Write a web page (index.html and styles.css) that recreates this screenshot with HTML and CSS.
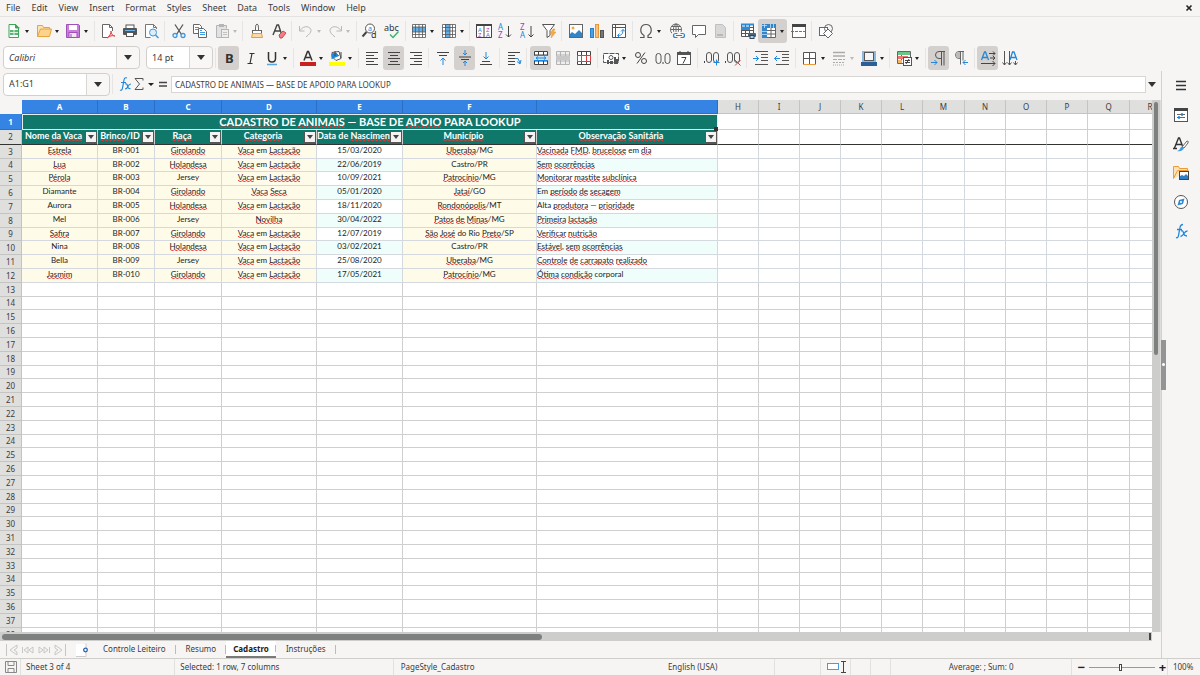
FILE: index.html
```html
<!DOCTYPE html>
<html lang="en">
<head>
<meta charset="utf-8">
<title>Cadastro</title>
<link rel="stylesheet" href="styles.css">
</head>
<body>
<nav class="menu">
<button>File</button><button>Edit</button><button>View</button><button>Insert</button><button>Format</button><button>Styles</button><button>Sheet</button><button>Data</button><button>Tools</button><button>Window</button><button>Help</button>
<button class="close" aria-label="Close"><svg width="8" height="8" viewBox="0 0 8 8"><path d="M1.500 1.500l5 5M6.500 1.500l-5 5" stroke="#222" stroke-width="1.600"/></svg></button>
</nav>

<div class="bar bar-standard"><div class="tools">
<button class="tool drop" aria-label="New"><svg viewBox="0 0 16 16"><path d="M3 1.500h6.500l3 3v10h-9.500z" fill="#fff" stroke="#3fa55b"/><path d="M9.500 1v4h4" fill="#3fa55b" stroke="#3fa55b"/><rect x="4" y="7" width="8" height="5" fill="#5cb574"/><path d="M4 9.500h8M8 7v5" stroke="#d8f2df"/></svg></button>
<button class="tool drop" aria-label="Open"><svg viewBox="0 0 16 16"><path d="M1.500 13.500v-11h5l1 2h6v2" fill="#fbe3b5" stroke="#e8a33d"/><path d="M1.500 13.500l3-7.500h11l-2 7.500z" fill="#fcd38c" stroke="#e8a33d"/></svg></button>
<button class="tool drop" aria-label="Save"><svg viewBox="0 0 16 16"><path d="M1.500 1.500h12l1 1v12h-13z" fill="#c77fd9" stroke="#a04fb8"/><rect x="4" y="2" width="8" height="5" fill="#fff"/><rect x="4" y="9.500" width="8" height="5" fill="#f3e5f7" stroke="#a04fb8"/><path d="M6 11v3" stroke="#a04fb8"/></svg></button>
<i class="sep"></i>
<button class="tool" aria-label="Export as PDF"><svg viewBox="0 0 16 16"><path d="M12.500 8v-3.500l-3-3h-7v13h5" fill="#fff" stroke="#666"/><path d="M9.500 1.500v3h3" stroke="#666" fill="none"/><path d="M7 15c3-2 4-5 4-7 0 3 2 5 4 5-3-1-5 0-8 2z" stroke="#e0474c" fill="#f7c5c7"/></svg></button>
<button class="tool" aria-label="Print"><svg viewBox="0 0 16 16"><rect x="4" y="2" width="8" height="4" fill="#fff" stroke="#555"/><rect x="1" y="5" width="14" height="7" rx="1" fill="#555"/><path d="M3 7.500h10" stroke="#6bb4ea"/><rect x="4.500" y="9.500" width="7" height="4" fill="#fff" stroke="#555"/></svg></button>
<button class="tool" aria-label="Print preview"><svg viewBox="0 0 16 16"><path d="M13.500 6v-1.500l-3-3h-8v13h5" fill="#fff" stroke="#777"/><path d="M10.500 1.500v3h3" stroke="#777" fill="none"/><circle cx="10" cy="9.500" r="3.500" fill="#d9edfb" stroke="#3d9ae0"/><path d="M12.500 12l3 3" stroke="#3d9ae0" stroke-width="1.500"/></svg></button>
<i class="sep"></i>
<button class="tool" aria-label="Cut"><svg viewBox="0 0 16 16"><path d="M4 1.500l6.500 10M12 1.500l-6.500 10" stroke="#555" fill="none" stroke-width="1.300"/><circle cx="4" cy="12.500" r="2" fill="none" stroke="#3d9ae0" stroke-width="1.300"/><circle cx="12" cy="12.500" r="2" fill="none" stroke="#3d9ae0" stroke-width="1.300"/></svg></button>
<button class="tool" aria-label="Copy"><svg viewBox="0 0 16 16"><path d="M1.500 1.500h6l2 2v7h-8z" fill="#fff" stroke="#666"/><path d="M3 4.500h4M3 6.500h3" stroke="#3d9ae0"/><path d="M6.500 5.500h5l3 3v6h-8z" fill="#fff" stroke="#666"/><path d="M8 9.500h5M8 11.500h5M8 7.500h2" stroke="#3d9ae0"/></svg></button>
<button class="tool drop off" aria-label="Paste"><svg viewBox="0 0 16 16"><path d="M7 14.500h-4.500v-12h10v3" fill="#e2e2e2" stroke="#b5b5b5"/><rect x="5" y="1" width="5" height="3" fill="#b5b5b5"/><rect x="7.500" y="6.500" width="7" height="8" fill="#eee" stroke="#b5b5b5"/><path d="M9 9.500h4M9 11.500h4" stroke="#c2c2c2"/></svg></button>
<i class="sep"></i>
<button class="tool" aria-label="Clone formatting"><svg viewBox="0 0 16 16"><path d="M6.500 8v-3q0-4 1.500-4t1.500 4v3" fill="#fff" stroke="#666"/><rect x="3.500" y="7.500" width="9" height="3" fill="#fff" stroke="#666"/><path d="M3.500 10.500h9l1 4h-11z" fill="#fbd9a8" stroke="#eb9a3c"/></svg></button>
<button class="tool" aria-label="Clear formatting"><svg viewBox="0 0 16 16"><path d="M2 12l4-10h1.500l3 9M4 8h5" stroke="#444" fill="none" stroke-width="1.400"/><path d="M8 12l4-4 3 2-4 5h-2z" fill="#f08083" stroke="#df4146"/></svg></button>
<i class="sep"></i>
<button class="tool drop off" aria-label="Undo"><svg viewBox="0 0 16 16"><path d="M1.500 3v5h5M2 7.500c4-6 11-4 11 0 0 2-2 4-5 6.500" stroke="#b8b8b8" fill="none"/></svg></button>
<button class="tool drop off" aria-label="Redo"><svg viewBox="0 0 16 16"><path d="M14.500 3v5h-5M14 7.500c-4-6-11-4-11 0 0 2 2 4 5 6.500" stroke="#b8b8b8" fill="none"/></svg></button>
<i class="sep"></i>
<button class="tool" aria-label="Find and replace"><svg viewBox="0 0 16 16"><circle cx="8" cy="5.500" r="4.500" fill="#fff" stroke="#555"/><path d="M4.500 9l-4 4.500" stroke="#444" stroke-width="2"/><text x="6" y="8" font-size="7" fill="#2287da">a</text><text x="9" y="15" font-size="9" fill="#333">d</text></svg></button>
<button class="tool" aria-label="Spelling"><svg viewBox="0 0 16 16"><text x="0" y="8" font-size="9" fill="#333">abc</text><path d="M6 11.500l3 3 5.500-6" stroke="#3db56c" fill="none" stroke-width="1.500"/></svg></button>
<i class="sep"></i>
<button class="tool drop" aria-label="Row"><svg viewBox="0 0 16 16"><path d="M1.500 1.500h13v13h-13z" fill="#fff"/><rect x="1" y="4" width="14" height="5" fill="#5fb0ea"/><path d="M1.500 1.500h13v13h-13zM4.500 1.500v13M8 1.500v13M11.500 1.500v13M1.500 4h13M1.500 9h13M1.500 11.500h13" fill="none" stroke="#555" stroke-width=".8"/></svg></button>
<button class="tool drop" aria-label="Column"><svg viewBox="0 0 16 16"><path d="M1.500 1.500h13v13h-13z" fill="#fff"/><rect x="4" y="1" width="5" height="14" fill="#5fb0ea"/><path d="M1.500 1.500h13v13h-13zM1.500 4.500h13M1.500 8h13M1.500 11.500h13M4.500 1.500v13M9 1.500v13M11.500 1.500v13" fill="none" stroke="#555" stroke-width=".8"/></svg></button>
<i class="sep"></i>
<button class="tool" aria-label="Sort"><svg viewBox="0 0 16 16"><path d="M.500 1.500h15v13h-15zM8 1v14" fill="#fff" stroke="#444"/><path d="M0 2h16" stroke="#444" stroke-width="2"/><text x="2" y="9" font-size="6" fill="#2287da">A</text><text x="2" y="14" font-size="6" fill="#a33fbb">Z</text><text x="10" y="9" font-size="6" fill="#a33fbb">Z</text><text x="10" y="14" font-size="6" fill="#2287da">A</text></svg></button>
<button class="tool" aria-label="Sort ascending"><svg viewBox="0 0 16 16"><text x="1" y="7" font-size="8" fill="#2287da">A</text><text x="1" y="15" font-size="8" fill="#a33fbb">Z</text><path d="M11.500 3v11M9 11.500l2.500 2.500 2.500-2.500" stroke="#444" fill="none"/></svg></button>
<button class="tool" aria-label="Sort descending"><svg viewBox="0 0 16 16"><text x="1" y="7" font-size="8" fill="#a33fbb">Z</text><text x="1" y="15" font-size="8" fill="#2287da">A</text><path d="M12 3v11M9.500 11.500l2.500 2.500 2.500-2.500" stroke="#444" fill="none"/></svg></button>
<button class="tool" aria-label="AutoFilter"><svg viewBox="0 0 16 16"><path d="M1.500 1.500h12l-4.500 6v5l-3 2v-7z" fill="#fff" stroke="#555"/><path d="M12 6l-3 5h2l-1 4 5-6h-2.500l1.500-3z" fill="#f5aa4a" stroke="#e8912a" stroke-width=".5"/></svg></button>
<i class="sep"></i>
<button class="tool" aria-label="Insert image"><svg viewBox="0 0 16 16"><rect x="1.500" y="1.500" width="13" height="13" fill="#fff" stroke="#666"/><circle cx="5" cy="5" r="1.500" fill="#f5aa4a"/><path d="M2 14v-3l2-2 3 2 4-4 3 3v4z" fill="#3385c6"/></svg></button>
<button class="tool" aria-label="Insert chart"><svg viewBox="0 0 16 16"><rect x="1.500" y="5.500" width="3" height="9" fill="#4ba2e2" stroke="#2b7fc3"/><rect x="6.500" y="1.500" width="3" height="13" fill="#f8c27c" stroke="#e8963a"/><rect x="11.500" y="7.500" width="3" height="7" fill="#777" stroke="#555"/></svg></button>
<button class="tool" aria-label="Pivot table"><svg viewBox="0 0 16 16"><path d="M1.500 1.500h13v13h-13zM1.500 4.500h13M4.500 1.500v13" fill="#fff" stroke="#555"/><path d="M7 12.500c4 0 5-2 5-6M10 8.500l2-2 2 2M8.500 10.500l-2 2 2 2" stroke="#2287da" fill="none"/></svg></button>
<i class="sep"></i>
<button class="tool drop" aria-label="Special character"><svg viewBox="0 0 16 16"><path d="M2 14.500h4v-2c-5-3-4-11 2-11s7 8 2 11v2h4" stroke="#555" fill="none" stroke-width="1.200"/></svg></button>
<i class="gap"></i>
<button class="tool" aria-label="Hyperlink"><svg viewBox="0 0 16 16"><circle cx="7" cy="6.500" r="5.500" fill="#fff" stroke="#666"/><path d="M1.500 6.500h11M7 1v11M3 3.500h8M3 9.500h8" stroke="#666" fill="none"/><ellipse cx="7" cy="6.500" rx="2.500" ry="5.500" fill="none" stroke="#666"/><rect x="3" y="9" width="13" height="7" fill="#f6f5f4"/><path d="M8.500 10.500h-2a2 2 0 0 0 0 4h2M11.500 10.500h2a2 2 0 0 1 0 4h-2M7 12.500h6" stroke="#2287da" fill="none" stroke-width="1.200"/></svg></button>
<button class="tool" aria-label="Comment"><svg viewBox="0 0 16 16"><path d="M1.500 2.500h13v9h-7l-3 3v-3h-3z" fill="#fff" stroke="#666"/></svg></button>
<button class="tool off" aria-label="Headers and footers"><svg viewBox="0 0 16 16"><path d="M3.500 1.500h7l3 3v10h-10z" fill="#d8d8d8" stroke="#c0c0c0"/><path d="M5 11h6v2h-6z" fill="#b8b8b8"/></svg></button>
<i class="sep"></i>
<button class="tool" aria-label="Define print area"><svg viewBox="0 0 16 16"><path d="M1.500 1.500h12v12h-12zM5.500 1.500v12M9.500 1.500v12M1.500 4.500h12M1.500 7.500h12M1.500 10.500h12" fill="#fff" stroke="#555"/><path d="M1 1.500h13M1 4.500h9M1 6h9" stroke="#2f8bd6" stroke-width="2"/><rect x="8" y="10" width="8" height="4" rx="1" fill="#4d6478"/><rect x="10" y="12.500" width="4" height="3" fill="#9fd0f5" stroke="#345"/></svg></button>
<button class="tool drop on" aria-label="Freeze rows and columns"><svg viewBox="0 0 16 16"><path d="M1.500 1.500h13v13h-13zM10 1.500v13M1.500 7.500h13M1.500 11h13" fill="#fff" stroke="#666"/><path d="M1 1h14v4h-9v10h-5z" fill="#3584c8"/><path d="M3.500 0v5M1 2.500h5M9.500 1v4M12.500 1v4M1 8.500h5M1 11.500h5" stroke="#bfe0fa" stroke-width=".8"/></svg></button>
<button class="tool" aria-label="Split window"><svg viewBox="0 0 16 16"><rect x="1.500" y="1.500" width="13" height="13" fill="#fff" stroke="#666"/><path d="M1 2.500h14" stroke="#444" stroke-width="3"/><path d="M0 8.500h16" stroke="#2287da" stroke-dasharray="3 1"/></svg></button>
<i class="sep"></i>
<button class="tool" aria-label="Show draw functions"><svg viewBox="0 0 16 16"><rect x="1.500" y="4.500" width="8" height="8" fill="#fff" stroke="#666"/><circle cx="10.500" cy="5.500" r="4" fill="none" stroke="#666"/><path d="M10 6l4.500 4.500-4.500 4.500-4.500-4.500z" fill="#fff" stroke="#666"/></svg></button>
</div></div>

<div class="bar bar-format">
<select class="combo font" aria-label="Font name"><option>Calibri</option></select>
<select class="combo size" aria-label="Font size"><option>14 pt</option></select>
<i class="sep"></i>
<div class="tools">
<button class="tool on" aria-label="Bold"><svg viewBox="0 0 16 16"><text x="4" y="13" font-size="13" font-weight="700" fill="#333">B</text></svg></button>
<button class="tool" aria-label="Italic"><svg viewBox="0 0 16 16"><path d="M6.500 3.500h5M4.500 13.500h5M9 3.500l-2 10" stroke="#333" fill="none" stroke-width="1.200"/></svg></button>
<button class="tool drop" aria-label="Underline"><svg viewBox="0 0 16 16"><path d="M4.500 2v6.500q0 3.500 3.500 3.500t3.500-3.500v-6.500" stroke="#333" fill="none" stroke-width="1.500"/><path d="M3 14.500h10" stroke="#5aa7e6" stroke-width="1.500"/></svg></button>
<i class="sep"></i>
<button class="tool drop" aria-label="Font color"><svg viewBox="0 0 16 16"><path d="M4 10.500l3.500-9h1l3.500 9M5.500 7.500h5" stroke="#333" fill="none" stroke-width="1.500"/><rect y="12" width="16" height="4" fill="#c9211e"/></svg></button>
<button class="tool drop" aria-label="Background color"><svg viewBox="0 0 16 16"><path d="M3 2.500l7-1 2 7-5 2-4-4z" fill="#fff" stroke="#555"/><path d="M3 9v-5l4-1 3 3" fill="#2287da" stroke="#2287da"/><path d="M6 1v5M12 2v6" stroke="#444"/><rect y="12" width="16" height="4" fill="#ff0"/></svg></button>
<i class="sep"></i>
<button class="tool" aria-label="Align left"><svg viewBox="0 0 16 16"><path d="M2 2.500h12M2 5.500h8M2 8.500h12M2 11.500h8M2 14.500h12" stroke="#444"/></svg></button>
<button class="tool on" aria-label="Center horizontally"><svg viewBox="0 0 16 16"><path d="M2 2.500h12M4 5.500h8M2 8.500h12M4 11.500h8M2 14.500h12" stroke="#444"/></svg></button>
<button class="tool" aria-label="Align right"><svg viewBox="0 0 16 16"><path d="M2 2.500h12M6 5.500h8M2 8.500h12M6 11.500h8M2 14.500h12" stroke="#444"/></svg></button>
<i class="sep"></i>
<button class="tool" aria-label="Align top"><svg viewBox="0 0 16 16"><path d="M2 2.500h12M4 5.500h8" stroke="#444"/><path d="M8 15v-7M5.500 10.500l2.500-2.500 2.500 2.500" stroke="#2287da" fill="none"/></svg></button>
<button class="tool on" aria-label="Center vertically"><svg viewBox="0 0 16 16"><path d="M2 7h12M4 9.500h8" stroke="#444"/><path d="M8 0v5M6 3l2 2 2-2M8 16v-5M6 13l2-2 2 2" stroke="#2287da" fill="none"/></svg></button>
<button class="tool" aria-label="Align bottom"><svg viewBox="0 0 16 16"><path d="M4 11.500h8M2 14.500h12" stroke="#444"/><path d="M8 2v7M5.500 6.500l2.500 2.500 2.500-2.500" stroke="#2287da" fill="none"/></svg></button>
<i class="sep"></i>
<button class="tool" aria-label="Wrap text"><svg viewBox="0 0 16 16"><path d="M2 2.500h12M2 5.500h7M2 8.500h9M2 11.500h7M2 14.500h7" stroke="#444"/><path d="M9 8.500h3l2 4.500M11 11.500l3 2.500 1-4" stroke="#2287da" fill="none"/></svg></button>
<i class="sep"></i>
<button class="tool on" aria-label="Merge and center"><svg viewBox="0 0 16 16"><path d="M1.500 1.500h13v13h-13zM1.500 5h13M1.500 11h13M5.500 1.500v13M10.500 1.500v13" fill="#fff" stroke="#444"/><rect x="1" y="6" width="14" height="4" fill="#c6e4fb"/><path d="M3 8h10M5 6.500l-2 1.500 2 1.500M11 6.500l2 1.500-2 1.500M1 5.500h14M1 10.500h14" stroke="#2287da" fill="none"/></svg></button>
<button class="tool off" aria-label="Merge cells"><svg viewBox="0 0 16 16"><path d="M1.500 1.500h13v13h-13zM1.500 5h13M1.500 11h13M5.500 1.500v13M10.500 1.500v13" fill="#eee" stroke="#b4b4b4"/><rect x="1" y="6" width="14" height="4" fill="#c8c8c8"/></svg></button>
<button class="tool" aria-label="Unmerge cells"><svg viewBox="0 0 16 16"><path d="M1.500 1.500h13v13h-13zM5.500 1.500v13M10.500 1.500v13" fill="#fff" stroke="#444"/><path d="M1 5.500h14M1 11.500h14M5.500 5v6M10.500 5v6M1.500 5v6M14.500 5v6" stroke="#e0393e"/></svg></button>
<i class="sep"></i>
<button class="tool drop" aria-label="Format as currency"><svg viewBox="0 0 16 16"><path d="M.500 3.500h15v9h-15z" stroke="#555" fill="#fff" stroke-dasharray="5 1"/><circle cx="8" cy="7.500" r="2" fill="#fff" stroke="#555"/><path d="M4 10h2v4h-2zM7 11h3v3h-3zM11 7h2v7h-2zM13 9h2v5h-2z" fill="#555"/></svg></button>
<button class="tool" aria-label="Format as percent"><svg viewBox="0 0 16 16"><circle cx="5" cy="5" r="2.500" fill="none" stroke="#444"/><circle cx="11" cy="11" r="2.500" fill="none" stroke="#444"/><path d="M12 2.500l-8 11" stroke="#444"/></svg></button>
<button class="tool" aria-label="Format as number"><svg viewBox="0 0 16 16"><rect x="1" y="3.500" width="5" height="10" rx="2.500" fill="none" stroke="#555"/><rect x="10" y="3.500" width="5" height="10" rx="2.500" fill="none" stroke="#555"/><path d="M8 12v2" stroke="#444"/></svg></button>
<button class="tool" aria-label="Format as date"><svg viewBox="0 0 16 16"><rect x="1.500" y="2.500" width="13" height="12" fill="#fff" stroke="#555"/><path d="M1 4h14" stroke="#555" stroke-width="2"/><path d="M4 1v2M12 1v2M5.500 7.500h4.500l-3 6" stroke="#444" fill="none"/></svg></button>
<i class="sep"></i>
<button class="tool" aria-label="Add decimal place"><svg viewBox="0 0 16 16"><rect x="2.500" y="2.500" width="5" height="10" rx="2.500" fill="none" stroke="#555"/><rect x="9.500" y="2.500" width="5" height="10" rx="2.500" fill="none" stroke="#555"/><path d="M.500 11v2" stroke="#444"/><path d="M12.500 9.500v6M9.500 12.500h6" stroke="#2287da"/></svg></button>
<button class="tool" aria-label="Delete decimal place"><svg viewBox="0 0 16 16"><rect x="2.500" y="2.500" width="5" height="10" rx="2.500" fill="none" stroke="#555"/><rect x="9.500" y="2.500" width="5" height="10" rx="2.500" fill="none" stroke="#555"/><path d="M.500 11v2" stroke="#444"/><path d="M10 10l5.500 5.500M15.500 10l-5.500 5.500" stroke="#e0393e"/></svg></button>
<i class="sep"></i>
<button class="tool" aria-label="Increase indent"><svg viewBox="0 0 16 16"><path d="M2 1.500h13M8 4.500h7M8 7.500h7M8 10.500h7M2 14.500h13" stroke="#555"/><path d="M0 8.500h5.500M3 6l2.500 2.500-2.500 2.500" stroke="#2287da" fill="none"/></svg></button>
<button class="tool" aria-label="Decrease indent"><svg viewBox="0 0 16 16"><path d="M2 1.500h13M8 4.500h7M8 7.500h7M8 10.500h7M2 14.500h13" stroke="#555"/><path d="M6 8.500h-5.500M3 6l-2.500 2.500 2.500 2.500" stroke="#2287da" fill="none"/></svg></button>
<i class="sep"></i>
<button class="tool drop" aria-label="Borders"><svg viewBox="0 0 16 16"><path d="M1.500 2.500h12v12h-12zM7.500 2.500v12M1.500 8.500h12" fill="#fff" stroke="#555"/><path d="M1 14.500h13" stroke="#eb9a3c"/></svg></button>
<button class="tool drop off" aria-label="Border style"><svg viewBox="0 0 16 16"><path d="M2 2.500h12M2 6h12" stroke="#aaa" stroke-width="1.500"/><path d="M2 9.500h12" stroke="#aaa" stroke-dasharray="4 1"/><path d="M2 12.500h12" stroke="#aaa" stroke-dasharray="2 1"/><path d="M2 15h12" stroke="#aaa" stroke-dasharray="1 1"/></svg></button>
<button class="tool drop" aria-label="Border color"><svg viewBox="0 0 16 16"><rect x="1" y="1" width="14" height="11" fill="#8db9dc"/><rect x="3.500" y="2.500" width="9" height="8" fill="#f5f5f5" stroke="#555"/><rect y="12" width="16" height="4" fill="#2a6099"/></svg></button>
<i class="sep"></i>
<button class="tool drop" aria-label="Conditional formatting"><svg viewBox="0 0 16 16"><path d="M1.500 1.500h13v12h-13zM5.500 1.500v12" fill="#fff" stroke="#666"/><rect x="2" y="2" width="12" height="3" fill="#69c889"/><rect x="2" y="6" width="10" height="3" fill="#ef7477"/><rect x="2" y="10" width="4" height="3" fill="#f6b765"/><rect x="7.500" y="7.500" width="8" height="8" fill="#fff" stroke="#555"/><path d="M9 10.500h5M9 12.500h5M13 9l-3 5" stroke="#444"/></svg></button>
<i class="sep"></i>
<button class="tool on" aria-label="Left-to-right"><svg viewBox="0 0 16 16"><path d="M14 1.500h-6a3.500 3.500 0 0 0 0 7h2M10.500 1.500v14M13 1.500v14" stroke="#555" fill="none"/><path d="M0 12.500h6M3.500 10l2.500 2.500-2.500 2.500" stroke="#2287da" fill="none"/></svg></button>
<button class="tool" aria-label="Right-to-left"><svg viewBox="0 0 16 16"><path d="M11 1.500h-5a3.500 3.500 0 0 0 0 7h1M7.500 1.500v13M10 1.500v9" stroke="#666" fill="none"/><path d="M5 2h2v6a3 3 0 0 1-2-6" fill="#bbb"/><path d="M15 12.500h-5M12.500 10l-2.500 2.500 2.500 2.500" stroke="#2287da" fill="none"/></svg></button>
<i class="sep"></i>
<button class="tool on" aria-label="Text left to right"><svg viewBox="0 0 16 16"><path d="M1.500 10l3-8h1l3 8M3 7.500h4" stroke="#2287da" fill="none" stroke-width="1.300"/><path d="M9 3.500h6M13 1.500l2 2-2 2M10 8h5M13 6l2 2-2 2M1 13.500h14M12.500 11l2.500 2.500-2.500 2.500" stroke="#444" fill="none"/></svg></button>
<button class="tool" aria-label="Text top to bottom"><svg viewBox="0 0 16 16"><path d="M8 10l2.500-8h1.500l3 8M9 7.500h5" stroke="#2287da" fill="none" stroke-width="1.300"/><path d="M2.500 1v14M.500 12.500l2 2.500 2-2.500M7.500 1v14M5.500 12.500l2 2.500 2-2.500M13.500 11v4M11.500 12.500l2 2.500 2-2.500" stroke="#555" fill="none"/></svg></button>
</div></div>

<div class="work">
<main class="doc">
<div class="formula">
<select class="combo name" aria-label="Name box"><option>A1:G1</option></select>
<i class="sep"></i>
<button class="fbtn" aria-label="Function wizard"><svg width="14" height="16" viewBox="0 0 14 16"><path d="M2 14q2 1 2.500-2l1.500-8q.5-3 3-2M3 6.500h5" stroke="#2287da" fill="none" stroke-width="1.200"/><path d="M7 8q2-1 2.500 2t3 2.500M13 8q-2 0-3 2.500t-3 2.500" stroke="#2287da" fill="none" stroke-width="1.200"/></svg></button>
<button class="fbtn sum" aria-label="Select function"><svg width="10" height="14" viewBox="0 0 10 14"><path d="M9 3.500v-2h-8l4.500 5.500-4.500 5.500h8v-2" stroke="#555" fill="none"/></svg></button>
<button class="fbtn" aria-label="Formula"><svg width="10" height="10" viewBox="0 0 10 10"><path d="M1 3.500h8M1 7h8" stroke="#444" stroke-width="1.500"/></svg></button>
<input class="finput" aria-label="Input line" value="CADASTRO DE ANIMAIS — BASE DE APOIO PARA LOOKUP">
<button class="expand" aria-label="Expand formula bar"><svg width="8" height="5" viewBox="0 0 8 5"><path d="M0 0h8l-4 5z" fill="#333"/></svg></button>
</div>

<div class="view">
<div class="grid">
<table>
<colgroup><col class="w22"><col class="w76"><col class="w57"><col class="w67"><col class="w95"><col class="w86"><col class="w134"><col class="w181"><col class="w41"><col class="w41"><col class="w41"><col class="w41"><col class="w41"><col class="w42"><col class="w41"><col class="w41"><col class="w41"><col class="w42"><col class="w41"></colgroup>
<thead>
<tr class="cols"><td class="corner"></td><th class="sel">A</th><th class="sel">B</th><th class="sel">C</th><th class="sel">D</th><th class="sel">E</th><th class="sel">F</th><th class="sel">G</th><th>H</th><th>I</th><th>J</th><th>K</th><th>L</th><th>M</th><th>N</th><th>O</th><th>P</th><th>Q</th><th>R</th></tr>
<tr class="title"><th class="sel">1</th><td colspan="7" class="banner"><u>CADASTRO</u> DE <u>ANIMAIS</u> — BASE DE <u>APOIO</u> PARA LOOKUP<b class="handle"></b></td><td><td><td><td><td><td><td><td><td><td><td></tr>
<tr class="heads"><th>2</th>
<td><div class="head"><span>Nome <u>da</u> <u>Vaca</u></span><button aria-label="Filter"></button></div></td>
<td><div class="head"><span><u>Brinco</u>/ID</span><button aria-label="Filter"></button></div></td>
<td><div class="head"><span><u>Raça</u></span><button aria-label="Filter"></button></div></td>
<td><div class="head"><span><u>Categoria</u></span><button aria-label="Filter"></button></div></td>
<td><div class="head long"><span>Data de <u>Nascimento</u></span><button aria-label="Filter"></button></div></td>
<td><div class="head"><span><u>Município</u></span><button aria-label="Filter"></button></div></td>
<td><div class="head"><span><u>Observação</u> <u>Sanitária</u></span><button aria-label="Filter"></button></div></td><td><td><td><td><td><td><td><td><td><td><td></tr>
</thead>
<tbody>
<tr class="rec"><th>3<td><u>Estrela</u><td>BR-001<td><u>Girolando</u><td><u>Vaca</u> em <u>Lactação</u><td>15/03/2020<td><u>Uberaba</u>/MG<td><u>Vacinada</u> <u>FMD</u>, <u>brucelose</u> em <u>dia</u><td><td><td><td><td><td><td><td><td><td><td></tr>
<tr class="rec"><th>4<td><u>Lua</u><td>BR-002<td><u>Holandesa</u><td><u>Vaca</u> em <u>Lactação</u><td>22/06/2019<td>Castro/PR<td><u>Sem</u> <u>ocorrências</u><td><td><td><td><td><td><td><td><td><td><td></tr>
<tr class="rec"><th>5<td><u>Pérola</u><td>BR-003<td>Jersey<td><u>Vaca</u> em <u>Lactação</u><td>10/09/2021<td><u>Patrocínio</u>/MG<td><u>Monitorar</u> <u>mastite</u> <u>subclínica</u><td><td><td><td><td><td><td><td><td><td><td></tr>
<tr class="rec"><th>6<td>Diamante<td>BR-004<td><u>Girolando</u><td><u>Vaca</u> <u>Seca</u><td>05/01/2020<td><u>Jataí</u>/GO<td>Em <u>período</u> <u>de</u> <u>secagem</u><td><td><td><td><td><td><td><td><td><td><td></tr>
<tr class="rec"><th>7<td>Aurora<td>BR-005<td><u>Holandesa</u><td><u>Vaca</u> em <u>Lactação</u><td>18/11/2020<td><u>Rondonópolis</u>/MT<td>Alta <u>produtora</u> — <u>prioridade</u><td><td><td><td><td><td><td><td><td><td><td></tr>
<tr class="rec"><th>8<td>Mel<td>BR-006<td>Jersey<td><u>Novilha</u><td>30/04/2022<td><u>Patos</u> <u>de</u> <u>Minas</u>/MG<td><u>Primeira</u> <u>lactação</u><td><td><td><td><td><td><td><td><td><td><td></tr>
<tr class="rec"><th>9<td><u>Safira</u><td>BR-007<td><u>Girolando</u><td><u>Vaca</u> em <u>Lactação</u><td>12/07/2019<td><u>São</u> <u>José</u> do Rio <u>Preto</u>/SP<td><u>Verificar</u> <u>nutrição</u><td><td><td><td><td><td><td><td><td><td><td></tr>
<tr class="rec"><th>10<td>Nina<td>BR-008<td><u>Holandesa</u><td><u>Vaca</u> em <u>Lactação</u><td>03/02/2021<td>Castro/PR<td><u>Estável</u>, <u>sem</u> <u>ocorrências</u><td><td><td><td><td><td><td><td><td><td><td></tr>
<tr class="rec"><th>11<td>Bella<td>BR-009<td>Jersey<td><u>Vaca</u> em <u>Lactação</u><td>25/08/2020<td><u>Uberaba</u>/MG<td><u>Controle</u> <u>de</u> <u>carrapato</u> <u>realizado</u><td><td><td><td><td><td><td><td><td><td><td></tr>
<tr class="rec"><th>12<td><u>Jasmim</u><td>BR-010<td><u>Girolando</u><td><u>Vaca</u> em <u>Lactação</u><td>17/05/2021<td><u>Patrocínio</u>/MG<td><u>Ótima</u> <u>condição</u> corporal<td><td><td><td><td><td><td><td><td><td><td></tr>
<tr><th>13<td><td><td><td><td><td><td><td><td><td><td><td><td><td><td><td><td><td></tr>
<tr><th>14<td><td><td><td><td><td><td><td><td><td><td><td><td><td><td><td><td><td></tr>
<tr><th>15<td><td><td><td><td><td><td><td><td><td><td><td><td><td><td><td><td><td></tr>
<tr><th>16<td><td><td><td><td><td><td><td><td><td><td><td><td><td><td><td><td><td></tr>
<tr><th>17<td><td><td><td><td><td><td><td><td><td><td><td><td><td><td><td><td><td></tr>
<tr><th>18<td><td><td><td><td><td><td><td><td><td><td><td><td><td><td><td><td><td></tr>
<tr><th>19<td><td><td><td><td><td><td><td><td><td><td><td><td><td><td><td><td><td></tr>
<tr><th>20<td><td><td><td><td><td><td><td><td><td><td><td><td><td><td><td><td><td></tr>
<tr><th>21<td><td><td><td><td><td><td><td><td><td><td><td><td><td><td><td><td><td></tr>
<tr><th>22<td><td><td><td><td><td><td><td><td><td><td><td><td><td><td><td><td><td></tr>
<tr><th>23<td><td><td><td><td><td><td><td><td><td><td><td><td><td><td><td><td><td></tr>
<tr><th>24<td><td><td><td><td><td><td><td><td><td><td><td><td><td><td><td><td><td></tr>
<tr><th>25<td><td><td><td><td><td><td><td><td><td><td><td><td><td><td><td><td><td></tr>
<tr><th>26<td><td><td><td><td><td><td><td><td><td><td><td><td><td><td><td><td><td></tr>
<tr><th>27<td><td><td><td><td><td><td><td><td><td><td><td><td><td><td><td><td><td></tr>
<tr><th>28<td><td><td><td><td><td><td><td><td><td><td><td><td><td><td><td><td><td></tr>
<tr><th>29<td><td><td><td><td><td><td><td><td><td><td><td><td><td><td><td><td><td></tr>
<tr><th>30<td><td><td><td><td><td><td><td><td><td><td><td><td><td><td><td><td><td></tr>
<tr><th>31<td><td><td><td><td><td><td><td><td><td><td><td><td><td><td><td><td><td></tr>
<tr><th>32<td><td><td><td><td><td><td><td><td><td><td><td><td><td><td><td><td><td></tr>
<tr><th>33<td><td><td><td><td><td><td><td><td><td><td><td><td><td><td><td><td><td></tr>
<tr><th>34<td><td><td><td><td><td><td><td><td><td><td><td><td><td><td><td><td><td></tr>
<tr><th>35<td><td><td><td><td><td><td><td><td><td><td><td><td><td><td><td><td><td></tr>
<tr><th>36<td><td><td><td><td><td><td><td><td><td><td><td><td><td><td><td><td><td></tr>
<tr><th>37<td><td><td><td><td><td><td><td><td><td><td><td><td><td><td><td><td><td></tr>
<tr><th>38<td><td><td><td><td><td><td><td><td><td><td><td><td><td><td><td><td><td></tr>
</tbody>
</table>
</div>
<div class="vscroll"><div class="vthumb"></div></div>
</div>
<div class="hscroll"><div class="htrack"><div class="hthumb"></div><i class="tick"></i></div></div>

<div class="tabs">
<div class="tabnav">
<button aria-label="First sheet"><svg width="14" height="12" viewBox="0 0 14 12"><path d="M1.500 0v12M12 1l-7 5 7 5v-3l-3-2 3-2z" stroke="#c6c6c4" fill="none"/></svg></button>
<button aria-label="Previous sheet"><svg width="14" height="12" viewBox="0 0 14 12"><path d="M1.500 3v6M7 3l-4 3 4 3zM12 3l-4 3 4 3z" stroke="#c6c6c4" fill="none"/></svg></button>
<button aria-label="Next sheet"><svg width="14" height="12" viewBox="0 0 14 12"><path d="M2 3l4 3-4 3zM7 3l4 3-4 3zM12.500 3v6" stroke="#c6c6c4" fill="none"/></svg></button>
<button aria-label="Last sheet"><svg width="14" height="12" viewBox="0 0 14 12"><path d="M12.500 0v12M2 1l7 5-7 5v-3l3-2-3-2z" stroke="#c6c6c4" fill="none"/></svg></button>
</div>
<button class="add" aria-label="Add sheet"><svg width="14" height="14" viewBox="0 0 14 14"><path d="M1 1h10v13h-10z" fill="#fff"/><path d="M1 13.500h10v-13" stroke="#ccc" fill="none"/><circle cx="10.500" cy="7" r="1.800" fill="#fff" stroke="#2a62a8" stroke-width="1.300"/></svg></button>
<button class="tab">Controle Leiteiro</button><button class="tab">Resumo</button><button class="tab current">Cadastro</button><button class="tab">Instruções</button>
</div>
</main>

<aside class="side">
<button class="splitter" aria-label="Hide sidebar"></button>
<button aria-label="Sidebar settings"><svg viewBox="0 0 16 16"><path d="M3 3.500h10M3 7.500h10M3 11.500h10" stroke="#333" stroke-width="1.500"/></svg></button>
<button aria-label="Properties"><svg viewBox="0 0 16 16"><rect x="1.500" y="1.500" width="13" height="13" fill="#fff" stroke="#555"/><path d="M1 2.500h14" stroke="#444" stroke-width="3"/><path d="M4 7.500h8M4 10.500h8" stroke="#666"/><path d="M9 6v3M6 9v3" stroke="#2287da" stroke-width="1.500"/></svg></button>
<button aria-label="Styles"><svg viewBox="0 0 16 16"><path d="M1.500 12l4-10h1l3 8M3 8.500h6M0 12.500h4" stroke="#333" fill="none" stroke-width="1.400"/><path d="M9 11l5-6q2 0 1 2l-4 5z" fill="#fff" stroke="#666"/><path d="M4 15q3-1 4-4 3-1 3 1-2 4-7 3z" fill="#3d9ae0"/></svg></button>
<button aria-label="Gallery"><svg viewBox="0 0 16 16"><path d="M.500 13.500v-12h5l1 2h8v3M.500 13.500l4-8h11" fill="#fde2b8" stroke="#eb9a3c"/><rect x="6.500" y="6.500" width="9" height="8" fill="#fff" stroke="#444"/><path d="M7 14v-3l2-1 2 1 2-2 2 2v3z" fill="#2f80c4"/></svg></button>
<button aria-label="Navigator"><svg viewBox="0 0 16 16"><circle cx="8" cy="8" r="6.500" fill="#fff" stroke="#555"/><path d="M11.500 4.500l-1.500 5.500-5.500 1.500 1.500-5.500z" fill="#2f8bd6"/><circle cx="8" cy="8" r="1" fill="#fff"/></svg></button>
<button aria-label="Functions"><svg viewBox="0 0 16 16"><path d="M3 14.500q2 1 2.500-2l1.500-8q.5-3 3-3M4 6.500h5" stroke="#2287da" fill="none" stroke-width="1.300"/><path d="M8 8q2-1 2.500 2t3.500 3M14.500 8q-2 0-3.500 2.500t-3.500 3" stroke="#2287da" fill="none" stroke-width="1.300"/></svg></button>
</aside>
</div>

<footer class="status">
<div class="g21"><svg width="12" height="12" viewBox="0 0 12 12"><path d="M.500.500h11v11h-11zM3 .500v4h6v-4M3 11.500v-4h6v4" stroke="#888" fill="none"/></svg></div>
<div class="g154">Sheet 3 of 4</div>
<div class="g218">Selected: 1 row, 7 columns</div>
<div class="g217 plain">PageStyle_Cadastro</div>
<div class="g164 mid">English (USA)</div>
<div class="g46"></div>
<div class="g30"><svg width="20" height="12" viewBox="0 0 20 12"><rect x="1.500" y="2.500" width="11" height="6" fill="#fff" stroke="#4b9bd8"/><path d="M15 .500h5M15 11.500h5M17.500 1v10" stroke="#444"/></svg></div>
<div class="g20"></div><div class="g20"></div>
<div class="g180 mid">Average: ; Sum: 0</div>
<div class="g96 zoom"><button aria-label="Zoom out">−</button><input type="range" min="0" max="100" value="48" aria-label="Zoom"><button aria-label="Zoom in">+</button></div>
<div class="g32 plain">100%</div>
</footer>
</body>
</html>
```
FILE: styles.css
```css
* { box-sizing: border-box; }
body {
  margin: 0;
  height: 100vh;
  display: flex;
  flex-direction: column;
  overflow: hidden;
  background: #f6f5f4;
  color: #3c3c3c;
  font: 9px/12px "Noto Sans", sans-serif;
}
button, input, select {
  font: inherit;
  color: inherit;
  margin: 0;
  padding: 0;
  border: 0;
  background: none;
}
svg { display: block; flex: none; overflow: visible; }

/* menu */
.menu {
  flex: none;
  height: 17px;
  display: flex;
  align-items: center;
  gap: 11px;
  padding: 0 7px 0 6px;
  border-bottom: 1px solid #e4e3e1;
}
.close { margin-left: auto; }

/* toolbars */
.bar { flex: none; height: 27px; display: flex; align-items: center; padding-left: 3px; }
.tools { flex: 1; display: flex; align-items: center; justify-content: space-between; }
.bar-standard .tools { max-width: 833px; }
.bar-format .tools { max-width: 802px; }
.tool {
  position: relative;
  flex: none;
  width: 21px;
  height: 24px;
  display: flex;
  align-items: center;
  padding-left: 3px;
  border-radius: 3px;
}
.tool svg, .side svg { width: 16px; height: 16px; }
.drop { width: 29px; gap: 3px; }
.drop::after {
  content: "";
  flex: none;
  margin-top: 2px;
  border: 2px solid transparent;
  border-top: 3px solid #222;
  border-bottom: 0;
}
.drop.off::after { border-top-color: #bbb; }
.on { background: #d3d0cd; }
.sep { flex: none; width: 1px; height: 20px; margin: 0 2px; background: #e6e5e3; }
.gap { width: 1px; }

.combo {
  appearance: none;
  height: 23px;
  padding: 0 26px 0 5px;
  border: 1px solid #d2cfcc;
  border-radius: 4px;
  background:
    url("data:image/svg+xml,%3Csvg xmlns='http://www.w3.org/2000/svg' width='8' height='5'%3E%3Cpath d='M0 0h8l-4 5z' fill='%23333'/%3E%3C/svg%3E") no-repeat right 7px center,
    linear-gradient(#d8d6d3, #d8d6d3) no-repeat right 22px center / 1px 100%,
    linear-gradient(#f8f7f6, #f8f7f6) no-repeat right / 22px 100%,
    #fff;
}
.font { width: 137px; font-style: italic; margin-right: 6px; }
.size { width: 67px; }
.name { width: 107px; }

/* work area */
.work { flex: 1; min-height: 0; display: flex; }
.doc { flex: 1; min-width: 0; display: flex; flex-direction: column; }
.formula { flex: none; height: 29px; display: flex; align-items: center; padding: 0 5px 3px 3px; }
.fbtn { flex: none; margin-left: 3px; }
.sum { display: flex; align-items: center; gap: 4px; margin: 0 1px 0 2px; }
.sum::after { content: ""; border: 3px solid transparent; border-top-color: #222; border-bottom: 0; }
.finput {
  flex: 1;
  min-width: 0;
  height: 17px;
  margin-left: 3px;
  padding: 0 3px;
  border: 1px solid #d8d6d3;
  background: #fff;
  font-size: 8px;
}
.expand { margin-left: 2px; }
.view { flex: 1; min-height: 0; display: flex; }
.grid { flex: 1; min-width: 0; overflow: hidden; background: #fff; }

table { width: 1171px; table-layout: fixed; border-collapse: separate; border-spacing: 0; }
.w22 { width: 22px; } .w76 { width: 76px; } .w57 { width: 57px; } .w67 { width: 67px; }
.w95 { width: 95px; } .w86 { width: 86px; } .w134 { width: 134px; } .w181 { width: 181px; }
.w41 { width: 41px; } .w42 { width: 42px; }
th, td {
  padding: 0;
  border: 0 solid #cfcfcf;
  border-width: 0 1px 1px 0;
  font-size: 8px;
  line-height: 12px;
  text-align: center;
  white-space: nowrap;
  overflow: hidden;
}
th { background: #dfdfde; border-color: #c4c4c3; font-weight: 400; color: #3c3c3c; }
td { font-family: Lato, sans-serif; color: #222; }
tbody tr { height: 14px; }
tbody tr:nth-child(5n+2) { height: 13px; }
.cols { height: 14px; }
.cols .corner { background: #f6f5f4; border-color: #f6f5f4; }
.sel { background: #3584e4; color: #fff; font-weight: 700; border-color: #2a6fc4; }
.title { height: 16px; }
.title .banner {
  position: relative;
  overflow: visible;
  background: #10786b;
  color: #fff;
  border-width: 1px;
  border-color: #e4efed;
  font-size: 11px;
  font-weight: 700;
}
.handle { position: absolute; right: -1px; bottom: -2px; width: 4px; height: 4px; background: #333; }
.heads { height: 15px; }
.heads th, .heads td { border-bottom-color: #333; }
.head {
  height: 14px;
  display: flex;
  align-items: center;
  background: #10786b;
  color: #fff;
  font-size: 9px;
  font-weight: 700;
}
.head span { flex: 1; min-width: 0; overflow: hidden; padding-bottom: 2px; }
.head.long span { text-align: left; }
.head button {
  flex: none;
  width: 12px;
  height: 12px;
  border: 1px solid #555;
  background: #f3f3f3;
  display: flex;
  align-items: center;
  justify-content: center;
}
.head button::after { content: ""; border: 3px solid transparent; border-top: 4px solid #444; border-bottom: 0; }
.rec td { border-color: #d3d9de; background: #fffbe9; line-height: 11px; vertical-align: top; }
.rec td:nth-child(6), .rec td:nth-child(8), .rec td:nth-child(n+9) { background: #fff; }
.rec:nth-child(even) td:nth-child(6), .rec:nth-child(even) td:nth-child(8) { background: #effdfb; }
.rec td:nth-child(8) { text-align: left; }
u {
  text-decoration: none;
  background: url("data:image/svg+xml,%3Csvg xmlns='http://www.w3.org/2000/svg' width='4' height='2'%3E%3Cpath d='M0 .5q1 0 2 1t2-1' fill='none' stroke='%23e33'/%3E%3C/svg%3E") repeat-x left bottom;
}

.vscroll { flex: none; width: 9px; padding: 2px; background: #cdcdcc; border-right: 1px solid #dddddc; }
.vthumb { height: 48%; border-radius: 3px; background: #7e7f7f; }
.hscroll { flex: none; padding-right: 9px; }
.htrack { height: 9px; display: flex; align-items: center; justify-content: space-between; padding: 0 1px 0 2px; background: #cdcdcc; }
.hthumb { width: 47%; height: 6px; border-radius: 3px; background: #7e7f7f; }
.tick { width: 2px; height: 7px; background: #444; }

.tabs { flex: none; height: 17px; display: flex; align-items: stretch; font-size: 8px; padding-left: 5px; }
.tabnav { display: flex; align-items: center; gap: 2px; }
.add { margin: 0 4px 0 8px; }
.tab { position: relative; padding: 0 10px 1px; }
.tab::after { content: ""; position: absolute; right: 0; top: 4px; bottom: 4px; width: 1px; background: #bbb; }
.current { background: #fff; font-weight: 700; color: #222; padding: 0 7px; border-bottom: 2px solid #7a7a7a; }

/* sidebar */
.side {
  position: relative;
  flex: none;
  width: 39px;
  display: flex;
  flex-direction: column;
  align-items: center;
  gap: 13px;
  padding-top: 7px;
  border-left: 1px solid #d3d1ce;
}
.splitter { position: absolute; left: -1px; top: calc(50% - 25px); width: 5px; height: 50px; background: #929594; }
.splitter::after { content: ""; display: block; margin: 0 auto; width: 3px; height: 3px; border-radius: 2px; background: #fff; }

/* status bar */
.status { flex: none; height: 17px; display: flex; border-top: 1px solid #d0cecb; font-size: 8px; }
.status > div {
  min-width: 0;
  display: flex;
  align-items: center;
  padding-left: 5px;
  border-right: 1px solid #e2e1df;
  white-space: nowrap;
}
.status > .plain { border-right: 0; }
.status > .mid { justify-content: center; padding: 0; }
.g20 { flex: 20 1 20px; } .g21 { flex: 21 1 21px; } .g30 { flex: 30 1 30px; } .g32 { flex: 32 1 32px; }
.g46 { flex: 46 1 46px; } .g96 { flex: 96 1 96px; } .g154 { flex: 154 1 154px; } .g164 { flex: 164 1 164px; }
.g180 { flex: 180 1 180px; } .g217 { flex: 217 1 217px; } .g218 { flex: 218 1 218px; }
.status > .g217 { padding-left: 7px; }
.zoom { gap: 3px; }
.zoom button { flex: none; width: 9px; font-size: 13px; font-weight: 700; color: #222; }
.zoom input { appearance: none; flex: 1; min-width: 0; height: 8px; background: linear-gradient(#999, #999) no-repeat center / 100% 1px; }
.zoom input::-webkit-slider-thumb { appearance: none; width: 3px; height: 7px; border: 1px solid #444; background: #fff; }
```
